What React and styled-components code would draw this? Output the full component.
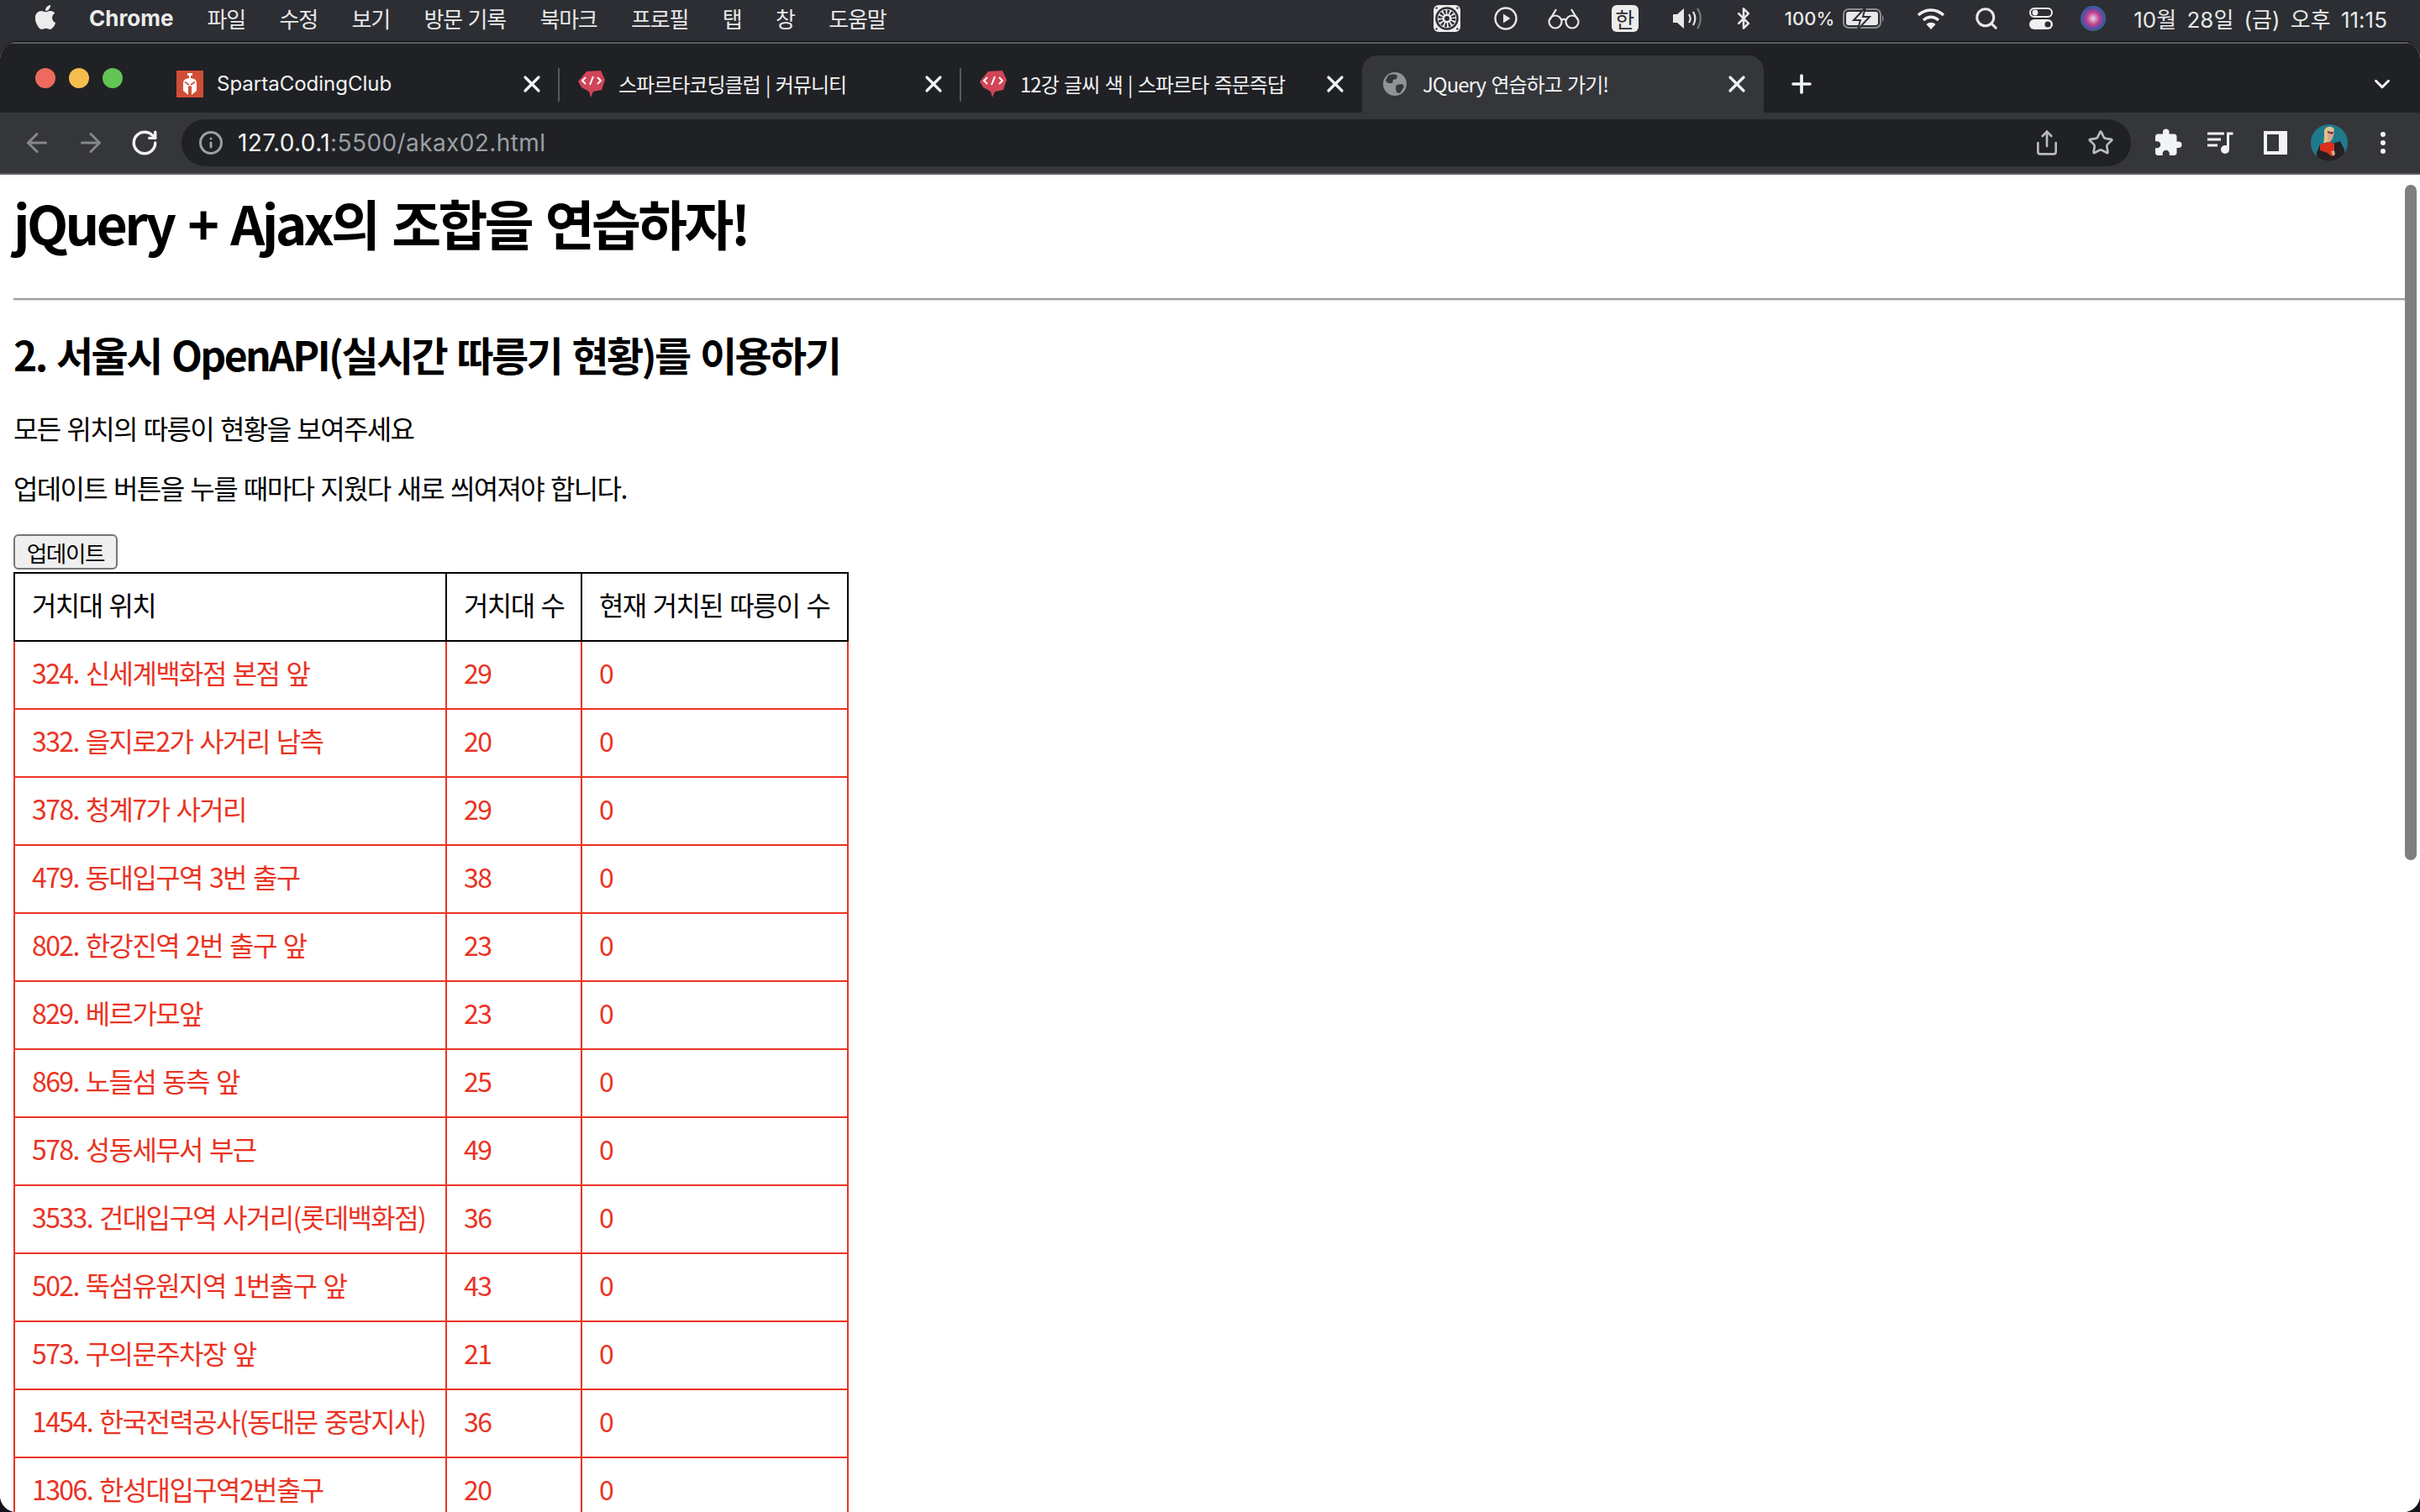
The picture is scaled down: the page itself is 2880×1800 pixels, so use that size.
import React from "react";
import styled, { createGlobalStyle } from "styled-components";
import { FaApple } from "react-icons/fa";
import { MdExtension } from "react-icons/md";
import {
  ArrowLeft,
  ArrowRight,
  Bluetooth,
  ChevronDown,
  Info,
  Plus,
  RotateCw,
  Search,
  Share,
  Star,
  X,
} from "lucide-react";

const UI_FONT = `Inter, "Noto Sans CJK KR", sans-serif`;
const PAGE_FONT = `"Noto Sans CJK KR", sans-serif`;
const RED = "#ea3323";

const MENUS = ["파일", "수정", "보기", "방문 기록", "북마크", "프로필", "탭", "창", "도움말"];

const STATIONS = [
  ["324. 신세계백화점 본점 앞", 29],
  ["332. 을지로2가 사거리 남측", 20],
  ["378. 청계7가 사거리", 29],
  ["479. 동대입구역 3번 출구", 38],
  ["802. 한강진역 2번 출구 앞", 23],
  ["829. 베르가모앞", 23],
  ["869. 노들섬 동측 앞", 25],
  ["578. 성동세무서 부근", 49],
  ["3533. 건대입구역 사거리(롯데백화점)", 36],
  ["502. 뚝섬유원지역 1번출구 앞", 43],
  ["573. 구의문주차장 앞", 21],
  ["1454. 한국전력공사(동대문 중랑지사)", 36],
  ["1306. 한성대입구역2번출구", 20],
];

const GlobalStyle = createGlobalStyle`
  html, body {
    margin: 0;
    padding: 0;
    height: 1800px;
    overflow: hidden;
    background: #14141e;
  }
  * {
    box-sizing: border-box;
  }
`;

// Favicons and small pictures
const SpartaIcon = () => (
  <svg width="32" height="32" viewBox="0 0 32 32">
    <rect width="32" height="32" fill="#d04e37" />
    <path d="M13 3h6v3h-2v3h-2V6h-2z" fill="#fff" />
    <path d="M8 15q0-6 8-6t8 6v9l-6 5V19l-2-1-2 1v10l-6-5z" fill="#fff" />
    <path d="M10 13.5 15 17M22 13.5 17 17" stroke="#d04e37" strokeWidth="1.6" />
  </svg>
);

const BubbleIcon = () => (
  <svg width="32" height="34" viewBox="0 0 32 34">
    <path d="M10 2 27 1l5 11-4 12-10 2-3 7-2-7-9-5L0 14z" fill="#d14558" />
    <path d="M9 9 5 13l4 4M23 9l4 4-4 4M18 8l-4 10" fill="none" stroke="#fff" strokeWidth="2" />
  </svg>
);

const GlobeIcon = () => (
  <svg width="28" height="28" viewBox="0 0 28 28">
    <circle cx="14" cy="14" r="14" fill="#8f9397" />
    <path d="M6 4c4-2 9-2 11 0l-1 4-4 1-1 4-5 0-3-3zM16 15l7-1 2 3-5 8-4-1-1-5z" fill="#35363a" />
  </svg>
);

const AppBadgeIcon = () => (
  <svg width="32" height="32" viewBox="0 0 32 32">
    <rect width="32" height="32" rx="6" fill="#ececec" />
    <circle cx="16" cy="16" r="12.5" fill="none" stroke="#2c2e33" strokeWidth="2.5" />
    <circle cx="16" cy="16" r="8" fill="none" stroke="#2c2e33" strokeWidth="5" strokeDasharray="2.4 1.8" />
    <circle cx="16" cy="16" r="3" fill="#2c2e33" />
    <circle cx="3.6" cy="3.6" r="1.2" fill="#2c2e33" />
    <circle cx="28.4" cy="3.6" r="1.2" fill="#2c2e33" />
    <circle cx="3.6" cy="28.4" r="1.2" fill="#2c2e33" />
    <circle cx="28.4" cy="28.4" r="1.2" fill="#2c2e33" />
  </svg>
);

const PlayIcon = () => (
  <svg width="28" height="28" viewBox="0 0 28 28">
    <circle cx="14" cy="14" r="12.5" fill="none" stroke="#e8e8e8" strokeWidth="2.4" />
    <path d="M11 8.5v11l8.5-5.5z" fill="#e8e8e8" />
  </svg>
);

const GlassesIcon = () => (
  <svg width="38" height="26" viewBox="0 0 38 26">
    <g fill="none" stroke="#e8e8e8" strokeWidth="2.2">
      <circle cx="9" cy="17" r="7.5" />
      <circle cx="29" cy="17" r="7.5" />
      <path d="M16 15c2-1.5 4-1.5 6 0M2 15 10 2M36 15 28 2" />
    </g>
  </svg>
);

const SpeakerIcon = () => (
  <svg width="36" height="28" viewBox="0 0 36 28">
    <path d="M1 9h5l8-7v24l-8-7H1z" fill="#e8e8e8" />
    <path d="M20 9c2 3 2 7 0 10M25 6c3 5 3 11 0 16" fill="none" stroke="#e8e8e8" strokeWidth="2.2" />
    <path d="M30 2c5 7 5 17 0 24" fill="none" stroke="#77797c" strokeWidth="2.2" />
  </svg>
);

const BatteryIcon = () => (
  <svg width="50" height="26" viewBox="0 0 50 26">
    <rect x="1" y="2" width="44" height="22" rx="6" fill="none" stroke="#8a8c8f" strokeWidth="2" />
    <rect x="4" y="5" width="38" height="16" rx="3" fill="#e8e8e8" />
    <path d="M47 9c2 1 2 7 0 8z" fill="#8a8c8f" />
    <path d="M27 0 13 15h8l-3 11 14-15h-8z" fill="#e8e8e8" stroke="#2c2e33" strokeWidth="2" />
  </svg>
);

const WifiIcon = () => (
  <svg width="34" height="26" viewBox="0 0 34 26">
    <g fill="none" stroke="#f0f0f0" strokeWidth="3.4">
      <path d="M2 9c9-8 21-8 30 0" />
      <path d="M8 15c6-5 12-5 18 0" />
    </g>
    <path d="M11.5 20c3-3 8-3 11 0L17 26z" fill="#f0f0f0" />
  </svg>
);

const ControlIcon = () => (
  <svg width="28" height="26" viewBox="0 0 28 26">
    <rect x="1" y="1" width="26" height="10" rx="5" fill="none" stroke="#f0f0f0" strokeWidth="2" />
    <circle cx="7" cy="6" r="3.4" fill="#f0f0f0" />
    <rect y="14" width="28" height="12" rx="6" fill="#f0f0f0" />
    <circle cx="22" cy="20" r="3.6" fill="#2c2e33" />
  </svg>
);

const SiriIcon = () => (
  <svg width="30" height="30" viewBox="0 0 30 30">
    <defs>
      <radialGradient id="siri" cx="50%" cy="50%" r="55%">
        <stop offset="0" stopColor="#e8d8ee" />
        <stop offset="0.45" stopColor="#c2408c" />
        <stop offset="0.8" stopColor="#4450a8" />
        <stop offset="1" stopColor="#2c8f86" />
      </radialGradient>
    </defs>
    <circle cx="15" cy="15" r="15" fill="url(#siri)" />
  </svg>
);

const MediaIcon = () => (
  <svg width="34" height="28" viewBox="0 0 34 28">
    <path d="M1 3h20M1 10h16M1 17h12" stroke="#f1f3f4" strokeWidth="3" fill="none" />
    <circle cx="22" cy="22" r="5" fill="#f1f3f4" />
    <path d="M25.5 22V3h6" stroke="#f1f3f4" strokeWidth="3" fill="none" />
  </svg>
);

const SidePanelIcon = () => (
  <svg width="28" height="28" viewBox="0 0 28 28">
    <rect width="28" height="28" fill="#f1f3f4" />
    <rect x="4" y="4" width="14" height="20" fill="#35363a" />
  </svg>
);

const AvatarIcon = () => (
  <svg width="44" height="44" viewBox="0 0 44 44">
    <defs>
      <clipPath id="avatar-clip">
        <circle cx="22" cy="22" r="22" />
      </clipPath>
    </defs>
    <g clipPath="url(#avatar-clip)">
      <rect width="44" height="44" fill="#1f7a8c" />
      <path d="M16 8c1-6 10-7 12-2l-1 4-4 8-1 6-7-1 1-7z" fill="#d9c48c" />
      <path d="M20 8l8 2-2 7-3 4-3-2z" fill="#d8a68c" />
      <path d="M20 8l4 1 3 0-1 3-6-2z" fill="#8c2a4a" />
      <path d="M7 34l4-10 10-3 5 2 9-3 5 10 2 14H7z" fill="#262022" />
      <path d="M11 24l11-3 6 2v11l-4 4-4-4-9-3z" fill="#dc2f1c" />
      <path d="M24 32l4-1 1 5-3 2z" fill="#d8a68c" />
    </g>
  </svg>
);

const Desktop = styled.div`
  display: flex;
  flex-direction: column;
  height: 1800px;
  background: linear-gradient(#2c2e33 0, #2c2e33 120px, #14141e 120px);
  font-family: ${UI_FONT};
`;

const MenuBar = styled.header`
  display: flex;
  align-items: center;
  flex: none;
  height: 50px;
  padding: 0 39px 7px 40px;
  color: #e8e8e8;
`;

const AppleLogo = styled(FaApple)`
  display: block;
  width: 28px;
  height: 33px;
  margin-top: -3px;
  color: #ececec;
`;

const AppName = styled.span`
  margin: 0 40px 0 38px;
  font-size: 26px;
  font-weight: 700;
  color: #ececec;
`;

const MenuItem = styled.span`
  margin-right: 40.5px;
  font-family: ${PAGE_FONT};
  font-size: 26px;
  letter-spacing: -1.2px;
  word-spacing: 2px;
  white-space: nowrap;
`;

const StatusArea = styled.div`
  display: flex;
  align-items: center;
  margin-left: auto;
`;

const StatusSlot = styled.span`
  display: flex;
  align-items: center;
  margin-left: ${(p) => p.$gap}px;
  color: #e8e8e8;
`;

const HangulBadge = styled.span`
  display: flex;
  align-items: center;
  justify-content: center;
  width: 32px;
  height: 32px;
  border-radius: 6px;
  background: #ececec;
  color: #2c2e33;
  font-family: ${PAGE_FONT};
  font-size: 25px;
`;

const StatusText = styled.span`
  font-size: 22px;
  font-weight: 500;
  white-space: nowrap;
`;

const ClockText = styled.span`
  font-size: 26px;
  word-spacing: 5px;
  white-space: nowrap;
`;

const Window = styled.main`
  display: flex;
  flex-direction: column;
  flex: 1;
  min-height: 0;
  overflow: hidden;
  border-radius: 20px;
  background: #fff;
  box-shadow: 0 -1px 0 #08080a;
`;

const TabStrip = styled.div`
  display: flex;
  flex: none;
  align-items: flex-end;
  height: 84px;
  padding: 0 30px 0 0;
  border-top: 2px solid #5c5d60;
  background: #202124;
`;

const TrafficLights = styled.div`
  display: flex;
  align-self: flex-start;
  gap: 16px;
  flex: none;
  width: 187px;
  padding: 29px 0 0 42px;
`;

const Light = styled.span`
  width: 24px;
  height: 24px;
  border-radius: 50%;
  background: ${(p) => p.$color};
`;

const Tab = styled.div`
  position: relative;
  display: flex;
  align-items: center;
  flex: none;
  gap: ${(p) => (p.$active ? 19 : 16)}px;
  width: 478px;
  height: 68px;
  padding: 0 16px 0 ${(p) => (p.$active ? 25 : 23)}px;
  border-radius: 18px 18px 0 0;
  background: ${(p) => (p.$active ? "#35363a" : "transparent")};
  color: #f1f3f4;

  &::before {
    content: "";
    display: ${(p) => (p.$divider ? "block" : "none")};
    position: absolute;
    left: -1px;
    top: 15px;
    width: 2px;
    height: 40px;
    background: #58595c;
  }
`;

const TabTitle = styled.span`
  flex: 1;
  padding-bottom: 1px;
  font-family: ${(p) => (p.$latin ? UI_FONT : PAGE_FONT)};
  font-size: 24px;
  letter-spacing: ${(p) => (p.$latin ? "0" : "-1px")};
  word-spacing: 2px;
  white-space: nowrap;
`;

const NewTab = styled.div`
  display: flex;
  align-items: center;
  justify-content: center;
  flex: none;
  width: 90px;
  height: 68px;
  color: #f1f3f4;
`;

const TabsMenu = styled.div`
  display: flex;
  align-items: center;
  height: 68px;
  margin-left: auto;
  color: #f1f3f4;
`;

const Toolbar = styled.nav`
  display: flex;
  flex: none;
  align-items: center;
  height: 74px;
  padding: 0 41px 0 26px;
  border-bottom: 2px solid #5f6063;
  background: #35363a;
`;

const NavButton = styled.span`
  display: flex;
  align-items: center;
  justify-content: center;
  flex: none;
  width: 36px;
  margin-right: ${(p) => p.$gap}px;
  color: ${(p) => (p.$dim ? "#85878a" : "#f1f3f4")};
`;

const AddressBar = styled.div`
  display: flex;
  align-items: center;
  flex: 1;
  height: 56px;
  padding: 0 20px 0 20px;
  border-radius: 28px;
  background: #202124;
`;

const Url = styled.span`
  margin-left: 17px;
  font-size: 28px;
  letter-spacing: 0.4px;
  color: #9aa0a6;
  white-space: nowrap;
`;

const UrlHost = styled.span`
  color: #f1f3f4;
`;

const AddressActions = styled.div`
  display: flex;
  align-items: center;
  gap: 32px;
  margin-left: auto;
  color: #b8babd;
`;

const ToolIcon = styled.span`
  display: flex;
  align-items: center;
  justify-content: center;
  flex: none;
  margin-left: ${(p) => p.$gap}px;
  color: #f1f3f4;
`;

const Kebab = styled.span`
  display: flex;
  flex-direction: column;
  flex: none;
  gap: 4px;
  margin-left: 39px;

  i {
    width: 6px;
    height: 6px;
    border-radius: 50%;
    background: #f1f3f4;
  }
`;

const Page = styled.section`
  position: relative;
  flex: 1;
  min-height: 0;
  overflow: hidden;
  padding: 18px 18px 0 16px;
  background: #fff;
  color: #000;
  font-family: ${PAGE_FONT};
`;

const Title = styled.h1`
  margin: 0;
  font-size: 64px;
  font-weight: 700;
  line-height: 76px;
  letter-spacing: -3.65px;
  word-spacing: 6px;
  white-space: nowrap;
`;

const Rule = styled.hr`
  height: 2px;
  margin: 53px 0 0;
  border: 0;
  background: #9a9a9a;
  box-shadow: 0 2px 0 #eeeeee;
`;

const Subtitle = styled.h2`
  margin: 35px 0 0;
  font-size: 48px;
  font-weight: 700;
  line-height: 58px;
  letter-spacing: -2.6px;
  word-spacing: 4px;
  white-space: nowrap;
`;

const Text = styled.p`
  margin: ${(p) => p.$top}px 0 0;
  font-size: 32px;
  line-height: 38px;
  letter-spacing: -1.65px;
  word-spacing: 2.4px;
`;

const UpdateButton = styled.button`
  display: block;
  width: 124px;
  height: 42px;
  margin: 37px 0 3px;
  padding: 0;
  border: 2px solid #767676;
  border-radius: 6px;
  background: #efefef;
  color: #000;
  font-family: ${PAGE_FONT};
  font-size: 26.67px;
  letter-spacing: -1.4px;
`;

const StationTable = styled.table`
  width: 992px;
  border-collapse: collapse;
  table-layout: fixed;
  font-size: 32px;
  letter-spacing: -1.6px;
  word-spacing: 2.4px;
`;

const HeadCell = styled.th`
  width: ${(p) => p.$width}px;
  height: 81px;
  padding: 0 20px 8px;
  border: 2px solid #000;
  font-weight: 400;
  text-align: left;
  white-space: nowrap;
`;

const Cell = styled.td`
  height: 81px;
  padding: 0 20px 8px;
  border: 2px solid ${RED};
  color: ${RED};
  white-space: nowrap;
`;

const ScrollThumb = styled.div`
  position: absolute;
  top: 12px;
  right: 4px;
  width: 14px;
  height: 804px;
  border-radius: 7px;
  background: #7f7f7f;
`;

export default function App() {
  return (
    <>
      <GlobalStyle />
      <Desktop>
        <MenuBar>
          <AppleLogo />
          <AppName>Chrome</AppName>
          {MENUS.map((item) => (
            <MenuItem key={item}>{item}</MenuItem>
          ))}
          <StatusArea>
            <StatusSlot $gap={0}>
              <AppBadgeIcon />
            </StatusSlot>
            <StatusSlot $gap={40}>
              <PlayIcon />
            </StatusSlot>
            <StatusSlot $gap={36}>
              <GlassesIcon />
            </StatusSlot>
            <StatusSlot $gap={38}>
              <HangulBadge>한</HangulBadge>
            </StatusSlot>
            <StatusSlot $gap={40}>
              <SpeakerIcon />
            </StatusSlot>
            <StatusSlot $gap={35}>
              <Bluetooth size={28} strokeWidth={2.2} />
            </StatusSlot>
            <StatusSlot $gap={35}>
              <StatusText>100%</StatusText>
            </StatusSlot>
            <StatusSlot $gap={10}>
              <BatteryIcon />
            </StatusSlot>
            <StatusSlot $gap={38}>
              <WifiIcon />
            </StatusSlot>
            <StatusSlot $gap={34}>
              <Search size={30} strokeWidth={2.4} />
            </StatusSlot>
            <StatusSlot $gap={36}>
              <ControlIcon />
            </StatusSlot>
            <StatusSlot $gap={33}>
              <SiriIcon />
            </StatusSlot>
            <StatusSlot $gap={33}>
              <ClockText>10월 28일 (금) 오후 11:15</ClockText>
            </StatusSlot>
          </StatusArea>
        </MenuBar>

        <Window>
          <TabStrip>
            <TrafficLights>
              <Light $color="#ee6a5f" />
              <Light $color="#f5bd4f" />
              <Light $color="#61c454" />
            </TrafficLights>
            <Tab>
              <SpartaIcon />
              <TabTitle $latin>SpartaCodingClub</TabTitle>
              <X size={32} strokeWidth={2.4} />
            </Tab>
            <Tab $divider>
              <BubbleIcon />
              <TabTitle>스파르타코딩클럽 | 커뮤니티</TabTitle>
              <X size={32} strokeWidth={2.4} />
            </Tab>
            <Tab $divider>
              <BubbleIcon />
              <TabTitle>12강 글씨 색 | 스파르타 즉문즉답</TabTitle>
              <X size={32} strokeWidth={2.4} />
            </Tab>
            <Tab $active>
              <GlobeIcon />
              <TabTitle>JQuery 연습하고 가기!</TabTitle>
              <X size={32} strokeWidth={2.4} />
            </Tab>
            <NewTab>
              <Plus size={34} strokeWidth={2.6} />
            </NewTab>
            <TabsMenu>
              <ChevronDown size={30} strokeWidth={2.4} />
            </TabsMenu>
          </TabStrip>

          <Toolbar>
            <NavButton $dim $gap={28}>
              <ArrowLeft size={36} strokeWidth={2} />
            </NavButton>
            <NavButton $dim $gap={28}>
              <ArrowRight size={36} strokeWidth={2} />
            </NavButton>
            <NavButton $gap={26}>
              <RotateCw size={34} strokeWidth={2.4} />
            </NavButton>
            <AddressBar>
              <Info size={30} strokeWidth={2.4} color="#9aa0a6" />
              <Url>
                <UrlHost>127.0.0.1</UrlHost>:5500/akax02.html
              </Url>
              <AddressActions>
                <Share size={32} strokeWidth={2} />
                <Star size={32} strokeWidth={2} />
              </AddressActions>
            </AddressBar>
            <ToolIcon $gap={26}>
              <MdExtension size={36} />
            </ToolIcon>
            <ToolIcon $gap={28}>
              <MediaIcon />
            </ToolIcon>
            <ToolIcon $gap={34}>
              <SidePanelIcon />
            </ToolIcon>
            <ToolIcon $gap={28}>
              <AvatarIcon />
            </ToolIcon>
            <Kebab>
              <i />
              <i />
              <i />
            </Kebab>
          </Toolbar>

          <Page>
            <Title>jQuery + Ajax의 조합을 연습하자!</Title>
            <Rule />
            <Subtitle>2. 서울시 OpenAPI(실시간 따릉기 현황)를 이용하기</Subtitle>
            <Text $top={40}>모든 위치의 따릉이 현황을 보여주세요</Text>
            <Text $top={33}>업데이트 버튼을 누를 때마다 지웠다 새로 씌여져야 합니다.</Text>
            <UpdateButton>업데이트</UpdateButton>
            <StationTable>
              <thead>
                <tr>
                  <HeadCell $width={514}>거치대 위치</HeadCell>
                  <HeadCell $width={161}>거치대 수</HeadCell>
                  <HeadCell $width={317}>현재 거치된 따릉이 수</HeadCell>
                </tr>
              </thead>
              <tbody>
                {STATIONS.map(([name, racks]) => (
                  <tr key={name}>
                    <Cell>{name}</Cell>
                    <Cell>{racks}</Cell>
                    <Cell>0</Cell>
                  </tr>
                ))}
              </tbody>
            </StationTable>
            <ScrollThumb />
          </Page>
        </Window>
      </Desktop>
    </>
  );
}
